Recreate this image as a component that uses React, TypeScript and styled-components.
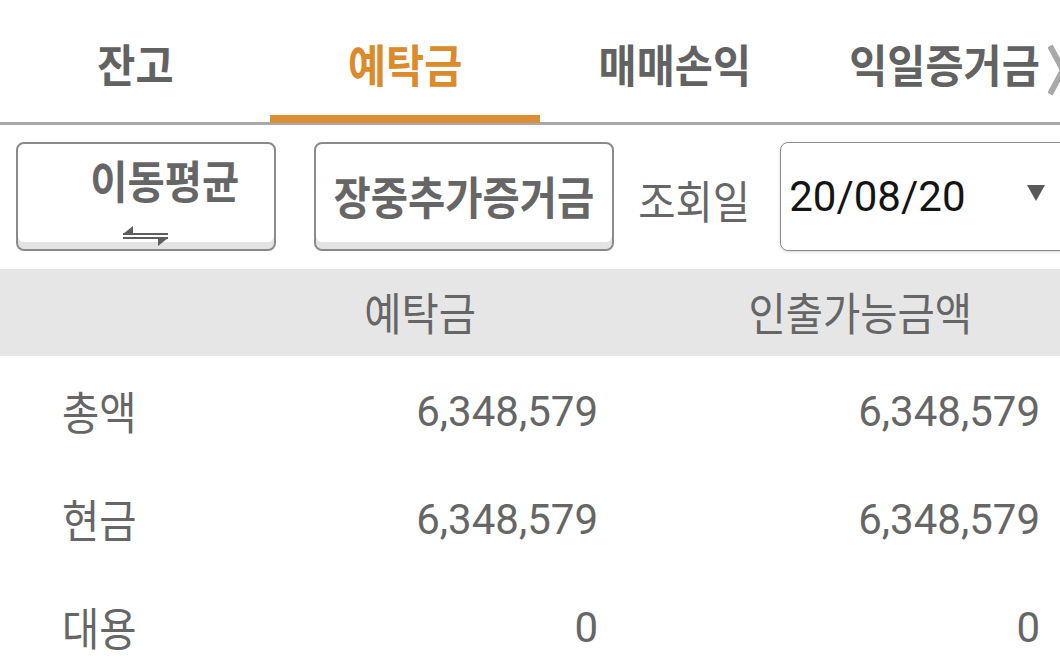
import { FC } from 'react';
import styled, { createGlobalStyle } from 'styled-components';

const GlobalStyle = createGlobalStyle`
  html, body {
    margin: 0;
    padding: 0;
    background: #ffffff;
  }
  body {
    font-family: Roboto, 'Noto Sans CJK KR', sans-serif;
    color: #666666;
  }
`;

const tabs = ['잔고', '예탁금', '매매손익', '익일증거금'];

const rows = [
  { label: '총액', deposit: '6,348,579', withdraw: '6,348,579' },
  { label: '현금', deposit: '6,348,579', withdraw: '6,348,579' },
  { label: '대용', deposit: '0', withdraw: '0' },
];

const App: FC = () => {
  return (
    <Page>
      <GlobalStyle />
      <TabBar>
        {tabs.map((t, i) => (
          <Tab key={t} $active={i === 1}>
            <Hangul $origin="center" $scale={0.92}>
              {t}
            </Hangul>
          </Tab>
        ))}
        <MoreChevron width="20" height="52" viewBox="0 0 20 52">
          <polyline points="2,2 15,26 2,50" fill="none" stroke="#a9a9a9" strokeWidth="6" />
        </MoreChevron>
      </TabBar>

      <Toolbar>
        <ToggleButton>
          <ButtonLabel $shift={38}>
            <Hangul $origin="center">이동평균</Hangul>
          </ButtonLabel>
          <svg width="48" height="22" viewBox="0 0 48 22">
            <polygon points="1,10 11,2 11,10" fill="#5e5e5e" />
            <rect x="1" y="9" width="45" height="2" fill="#5e5e5e" />
            <rect x="1" y="13" width="45" height="2" fill="#5e5e5e" />
            <polygon points="36,14 46,14 36,22" fill="#5e5e5e" />
          </svg>
        </ToggleButton>
        <ActionButton>
          <Hangul $origin="center">장중추가증거금</Hangul>
        </ActionButton>
        <DateLabel>
          <Hangul $origin="center">조회일</Hangul>
        </DateLabel>
        <DateSelect>
          <span>20/08/20</span>
          <Caret width="20" height="17" viewBox="0 0 20 17">
            <polygon points="1,1 19,1 10,17" fill="#5a5a5a" />
          </Caret>
        </DateSelect>
      </Toolbar>

      <HeaderRow>
        <Cell />
        <HeadCell>
          <Hangul $origin="center">예탁금</Hangul>
        </HeadCell>
        <HeadCell $wide>
          <Hangul $origin="center">인출가능금액</Hangul>
        </HeadCell>
      </HeaderRow>

      {rows.map((r) => (
        <BodyRow key={r.label}>
          <LabelCell>
            <Hangul $origin="left">{r.label}</Hangul>
          </LabelCell>
          <NumberCell>{r.deposit}</NumberCell>
          <NumberCell $wide>{r.withdraw}</NumberCell>
        </BodyRow>
      ))}
    </Page>
  );
};

const Page = styled.div`
  width: 1060px;
  height: 665px;
  overflow: hidden;
  background: #ffffff;
`;

const Hangul = styled.span<{ $origin: 'left' | 'center'; $scale?: number }>`
  display: inline-block;
  transform: scaleX(${({ $scale }) => $scale ?? 0.9});
  transform-origin: ${({ $origin }) => $origin};
  white-space: nowrap;
`;

const TabBar = styled.div`
  position: relative;
  display: grid;
  grid-template-columns: repeat(4, 270px);
  height: 122px;
  border-bottom: 3px solid #a9a9a9;
`;

const Tab = styled.div<{ $active: boolean }>`
  display: flex;
  align-items: center;
  justify-content: center;
  padding-top: 4px;
  font-size: 45px;
  font-weight: 700;
  color: ${({ $active }) => ($active ? '#db8a2c' : '#626262')};
  box-shadow: ${({ $active }) => ($active ? 'inset 0 -8px 0 #dd8d33' : 'none')};
  margin-bottom: -1px;
`;

const MoreChevron = styled.svg`
  position: absolute;
  right: -8px;
  top: 44px;
`;

const Toolbar = styled.div`
  display: flex;
  align-items: center;
  padding: 17px 0 18px 16px;
  height: 109px;
  > * {
    flex-shrink: 0;
  }
`;

const ButtonBase = styled.div`
  box-sizing: border-box;
  height: 109px;
  border: 2px solid #8a8a8a;
  border-radius: 8px;
  background: #ffffff;
  box-shadow: inset 0 -7px 0 #e3e3e3;
  color: #666666;
  font-size: 45px;
  font-weight: 700;
  display: flex;
  flex-direction: column;
  align-items: center;
  justify-content: center;
`;

const ToggleButton = styled(ButtonBase)`
  width: 260px;
  justify-content: flex-start;
  padding-top: 12px;
  gap: 12px;
`;

const ButtonLabel = styled.div<{ $shift: number }>`
  padding-left: ${({ $shift }) => $shift}px;
  line-height: 56px;
`;

const ActionButton = styled(ButtonBase)`
  width: 300px;
  margin-left: 38px;
  padding-bottom: 2px;
`;

const DateLabel = styled.div`
  margin-left: 18px;
  font-size: 45px;
  color: #666666;
  padding-top: 6px;
`;

const DateSelect = styled.div`
  box-sizing: border-box;
  margin-left: 24px;
  width: 300px;
  height: 109px;
  border: 1.5px solid #8a8a8a;
  border-radius: 8px;
  box-shadow: 0 1px 3px rgba(0, 0, 0, 0.15);
  display: flex;
  align-items: center;
  padding-left: 8px;
  font-family: Roboto, sans-serif;
  font-size: 42px;
  color: #141414;
`;

const Caret = styled.svg`
  margin-left: 60px;
  margin-top: -8px;
`;

const HeaderRow = styled.div`
  display: grid;
  grid-template-columns: 240px 360px 460px;
  height: 87px;
  background: #e6e6e6;
  align-items: center;
  font-size: 45px;
  color: #666666;
`;

const Cell = styled.div``;

const HeadCell = styled.div<{ $wide?: boolean }>`
  text-align: center;
  padding-left: ${({ $wide }) => ($wide ? '60px' : '0')};
  padding-bottom: 2px;
`;

const BodyRow = styled.div`
  display: grid;
  grid-template-columns: 240px 360px 460px;
  height: 108px;
  align-items: center;
  font-size: 45px;
  color: #666666;
`;

const LabelCell = styled.div`
  padding-left: 62px;
`;

const NumberCell = styled.div<{ $wide?: boolean }>`
  font-family: Roboto, sans-serif;
  font-size: 42px;
  text-align: right;
  padding-right: ${({ $wide }) => ($wide ? '20px' : '2px')};
  padding-top: 2px;
`;

export default App;
